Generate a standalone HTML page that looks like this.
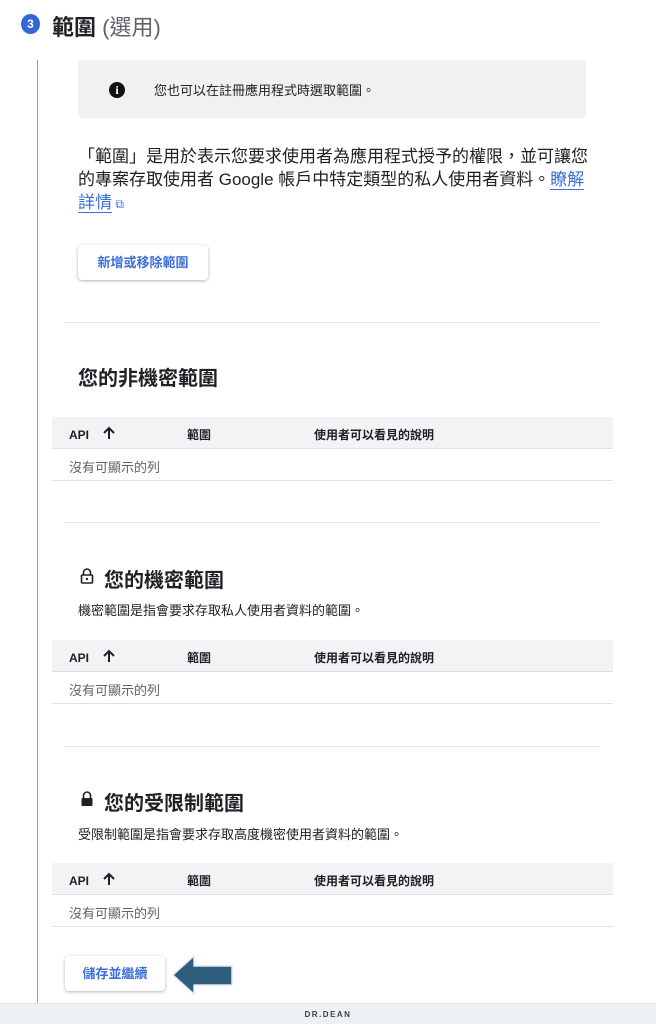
<!DOCTYPE html>
<html><head><meta charset="utf-8"><style>
*{margin:0;padding:0;box-sizing:border-box}
body{width:656px;height:1024px;background:#fff;position:relative;overflow:hidden;font-family:"Liberation Sans","Noto Sans CJK TC",sans-serif;color:#202124}
.a{position:absolute;white-space:nowrap}
.hr{position:absolute;left:65px;width:535px;height:1px;background:#e3e3e3}
.th{position:absolute;left:52px;width:561px;height:32px;background:#f1f3f4;border-bottom:1px solid #e0e0e0;font-size:12px;font-weight:bold}
.th span{position:absolute;top:9px}
.th span.api{top:11px}
.th svg{position:absolute;left:50px;top:9px}
.row{position:absolute;left:52px;width:561px;height:32px;border-bottom:1px solid #e0e0e0;font-size:13px;color:#5f6368}
.row span{position:absolute;left:17px;top:8px}
.h2{font-size:20px;font-weight:bold}
.btn{position:absolute;background:#fff;border-radius:4px;box-shadow:0 1px 3px rgba(0,0,0,.3);color:#3c6fd8;font-weight:bold;font-size:13px;text-align:center}
</style></head><body>
<div class="a" style="left:21px;top:14px;width:19px;height:20px;border-radius:50%;background:#3367d6;color:#fff;font-size:12px;font-weight:bold;text-align:center;line-height:20px">3</div>
<div class="a" style="left:52px;top:10px;font-size:22px;font-weight:bold">範圍 <span style="font-weight:normal;color:#5f6368">(選用)</span></div>
<div class="a" style="left:37px;top:60px;width:1px;height:944px;background:#9e9e9e"></div>
<div class="a" style="left:78px;top:60px;width:508px;height:58px;background:#f1f1f1;border-radius:4px"></div>
<div class="a" style="left:109px;top:82px;width:16px;height:16px;border-radius:50%;background:#111;color:#fff;font-size:12px;font-weight:bold;text-align:center;line-height:16px;font-family:'Liberation Serif',serif">i</div>
<div class="a" style="left:154px;top:80px;font-size:13px">您也可以在註冊應用程式時選取範圍。</div>
<div class="a" style="left:78px;top:145px;width:512px;white-space:normal;font-size:17px;line-height:23px">「範圍」是用於表示您要求使用者為應用程式授予的權限，並可讓您的專案存取使用者 Google 帳戶中特定類型的私人使用者資料。<span style="color:#3c6fd8;border-bottom:1px solid #3c6fd8">瞭解詳情</span><span style="color:#3c6fd8;font-size:12px"> ⧉</span></div>
<div class="btn" style="left:78px;top:245px;width:130px;height:35px;line-height:35px">新增或移除範圍</div>
<div class="hr" style="top:322px"></div>
<div class="a h2" style="left:78px;top:362px">您的非機密範圍</div>
<div class="th" style="top:417px"><span class="api" style="left:17px">API</span><svg width="14" height="14" viewBox="0 0 14 14"><path d="M7 13V2M2 7l5-5 5 5" fill="none" stroke="#202124" stroke-width="2"/></svg><span style="left:135px">範圍</span><span style="left:262px">使用者可以看見的說明</span></div>
<div class="row" style="top:449px"><span>沒有可顯示的列</span></div>
<div class="hr" style="top:522px"></div>
<div class="a" style="left:80px;top:568px;width:14px;height:16px">
<svg width="14" height="16" viewBox="0 0 14 16"><path d="M3.5 7V4.5a3.5 3.5 0 0 1 7 0V7" fill="none" stroke="#202124" stroke-width="1.6"/><rect x="1.5" y="7" width="11" height="8" rx="1" fill="none" stroke="#202124" stroke-width="1.6"/><circle cx="7" cy="11" r="1.2" fill="#202124"/></svg></div>
<div class="a h2" style="left:104px;top:564px">您的機密範圍</div>
<div class="a" style="left:78px;top:600px;font-size:13px">機密範圍是指會要求存取私人使用者資料的範圍。</div>
<div class="th" style="top:640px"><span class="api" style="left:17px">API</span><svg width="14" height="14" viewBox="0 0 14 14"><path d="M7 13V2M2 7l5-5 5 5" fill="none" stroke="#202124" stroke-width="2"/></svg><span style="left:135px">範圍</span><span style="left:262px">使用者可以看見的說明</span></div>
<div class="row" style="top:672px"><span>沒有可顯示的列</span></div>
<div class="hr" style="top:746px"></div>
<div class="a" style="left:80px;top:791px;width:14px;height:16px">
<svg width="14" height="16" viewBox="0 0 14 16"><path d="M3.5 7V4.5a3.5 3.5 0 0 1 7 0V7" fill="none" stroke="#202124" stroke-width="1.6"/><rect x="1.5" y="7" width="11" height="8" rx="1" fill="#202124"/></svg></div>
<div class="a h2" style="left:104px;top:787px">您的受限制範圍</div>
<div class="a" style="left:78px;top:824px;font-size:13px">受限制範圍是指會要求存取高度機密使用者資料的範圍。</div>
<div class="th" style="top:863px"><span class="api" style="left:17px">API</span><svg width="14" height="14" viewBox="0 0 14 14"><path d="M7 13V2M2 7l5-5 5 5" fill="none" stroke="#202124" stroke-width="2"/></svg><span style="left:135px">範圍</span><span style="left:262px">使用者可以看見的說明</span></div>
<div class="row" style="top:895px"><span>沒有可顯示的列</span></div>
<div class="btn" style="left:65px;top:956px;width:100px;height:35px;line-height:35px">儲存並繼續</div>
<svg class="a" style="left:170px;top:954px" width="64" height="42" viewBox="0 0 64 42"><path d="M3 21 L24 2 V12 H62 V31 H24 V40 Z" fill="#2f5d7c" stroke="#dce8f3" stroke-width="1.5" stroke-linejoin="round"/></svg>
<div class="a" style="left:0;top:1003px;width:656px;height:21px;background:#eef1f3;border-top:1px solid #e0e4e7;text-align:center;font-size:8px;letter-spacing:1.5px;line-height:21px;color:#2f4656;font-weight:bold">DR.DEAN</div>
</body></html>
